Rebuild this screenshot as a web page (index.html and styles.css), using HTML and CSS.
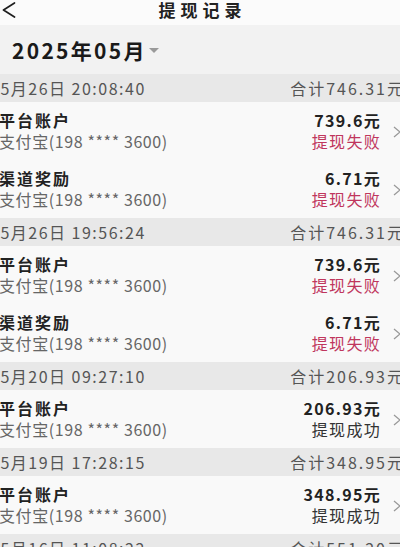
FILE: index.html
```html
<!DOCTYPE html>
<html lang="zh-CN">
<head>
<meta charset="utf-8">
<title>提现记录</title>
<link rel="stylesheet" href="styles.css">
</head>
<body>
<div class="page">
  <header class="topbar">
    <svg class="back" viewBox="0 0 14 16" width="14" height="16"><path d="M12.5 1 L1.5 8 L12.5 15" fill="none" stroke="#1e1e1e" stroke-width="1.7" stroke-linecap="round" stroke-linejoin="round"/></svg>
    <h1 class="title">提现记录</h1>
  </header>

  <div class="month">2025年05月<span class="caret"></span></div>

  <section class="group">
    <div class="group-head"><span class="date">05月26日 20:08:40</span><span class="total">合计746.31元</span></div>
    <div class="row">
      <div class="info"><div class="name">平台账户</div><div class="sub">支付宝(198 **** 3600)</div></div>
      <div class="money"><div class="amount">739.6元</div><div class="status fail">提现失败</div></div>
      <svg class="chev" viewBox="0 0 8 12" width="8" height="12"><path d="M1 1 L7 6 L1 11" fill="none" stroke="#999" stroke-width="1.3"/></svg>
    </div>
    <div class="row">
      <div class="info"><div class="name">渠道奖励</div><div class="sub">支付宝(198 **** 3600)</div></div>
      <div class="money"><div class="amount">6.71元</div><div class="status fail">提现失败</div></div>
      <svg class="chev" viewBox="0 0 8 12" width="8" height="12"><path d="M1 1 L7 6 L1 11" fill="none" stroke="#999" stroke-width="1.3"/></svg>
    </div>
  </section>

  <section class="group">
    <div class="group-head"><span class="date">05月26日 19:56:24</span><span class="total">合计746.31元</span></div>
    <div class="row">
      <div class="info"><div class="name">平台账户</div><div class="sub">支付宝(198 **** 3600)</div></div>
      <div class="money"><div class="amount">739.6元</div><div class="status fail">提现失败</div></div>
      <svg class="chev" viewBox="0 0 8 12" width="8" height="12"><path d="M1 1 L7 6 L1 11" fill="none" stroke="#999" stroke-width="1.3"/></svg>
    </div>
    <div class="row">
      <div class="info"><div class="name">渠道奖励</div><div class="sub">支付宝(198 **** 3600)</div></div>
      <div class="money"><div class="amount">6.71元</div><div class="status fail">提现失败</div></div>
      <svg class="chev" viewBox="0 0 8 12" width="8" height="12"><path d="M1 1 L7 6 L1 11" fill="none" stroke="#999" stroke-width="1.3"/></svg>
    </div>
  </section>

  <section class="group">
    <div class="group-head"><span class="date">05月20日 09:27:10</span><span class="total">合计206.93元</span></div>
    <div class="row">
      <div class="info"><div class="name">平台账户</div><div class="sub">支付宝(198 **** 3600)</div></div>
      <div class="money"><div class="amount">206.93元</div><div class="status">提现成功</div></div>
      <svg class="chev" viewBox="0 0 8 12" width="8" height="12"><path d="M1 1 L7 6 L1 11" fill="none" stroke="#999" stroke-width="1.3"/></svg>
    </div>
  </section>

  <section class="group">
    <div class="group-head"><span class="date">05月19日 17:28:15</span><span class="total">合计348.95元</span></div>
    <div class="row">
      <div class="info"><div class="name">平台账户</div><div class="sub">支付宝(198 **** 3600)</div></div>
      <div class="money"><div class="amount">348.95元</div><div class="status">提现成功</div></div>
      <svg class="chev" viewBox="0 0 8 12" width="8" height="12"><path d="M1 1 L7 6 L1 11" fill="none" stroke="#999" stroke-width="1.3"/></svg>
    </div>
  </section>

  <section class="group">
    <div class="group-head"><span class="date">05月16日 11:08:22</span><span class="total">合计551.20元</span></div>
  </section>
</div>
</body>
</html>
```

FILE: styles.css
```css
html, body {
  margin: 0;
  padding: 0;
  background: #f9f9f9;
}

body {
  width: 400px;
  height: 547px;
  overflow: hidden;
  font-family: "Noto Sans CJK SC", "Noto Sans", sans-serif;
  color: #222;
}

.page {
  display: flex;
  flex-direction: column;
}

/* top navigation */
.topbar {
  height: 25px;
  display: flex;
  align-items: flex-start;
  justify-content: center;
  position: relative;
  background: #fbfbfb;
}

.back {
  position: absolute;
  left: 2px;
  top: 2px;
}

.title {
  margin: 0;
  font-size: 17px;
  font-weight: 700;
  line-height: 19px;
  letter-spacing: 5px;
  margin-right: -5px;
  color: #222;
}

/* month picker */
.month {
  height: 49px;
  display: flex;
  align-items: center;
  padding-left: 12px;
  background: #f2f2f2;
  font-size: 21px;
  font-weight: 700;
  line-height: 26px;
  letter-spacing: 2.3px;
  color: #1a1a1a;
}

.caret {
  width: 0;
  height: 0;
  margin-left: 2px;
  margin-top: 2px;
  border-left: 5px solid transparent;
  border-right: 5px solid transparent;
  border-top: 5px solid #9a9a9a;
}

/* grouped records */
.group-head {
  height: 28px;
  display: flex;
  align-items: center;
  justify-content: space-between;
  background: #e8e8e8;
  font-size: 16px;
  line-height: 20px;
  color: #555;
}

.date {
  margin-left: -10px;
  letter-spacing: 1.5px;
}

.total {
  margin-right: -5px;
  letter-spacing: 2px;
}

.row {
  height: 58px;
  box-sizing: border-box;
  padding-top: 8px;
  display: flex;
  align-items: flex-start;
  background: #f9f9f9;
}

.info {
  flex: 1;
  margin-left: -1px;
}

.name {
  font-size: 16px;
  font-weight: 700;
  line-height: 21px;
  letter-spacing: 2px;
  color: #222;
}

.sub {
  font-size: 16px;
  line-height: 21px;
  color: #666;
  letter-spacing: 0.6px;
}

.money {
  text-align: right;
  margin-right: -1px;
}

.amount {
  font-size: 16px;
  font-weight: 700;
  line-height: 21px;
  letter-spacing: 1.3px;
  color: #222;
}

.status {
  font-size: 16px;
  line-height: 21px;
  color: #333;
  letter-spacing: 1.3px;
}

.status.fail {
  color: #c0365d;
}

.chev {
  flex: none;
  margin: 16px -1px 0 13px;
}
```
